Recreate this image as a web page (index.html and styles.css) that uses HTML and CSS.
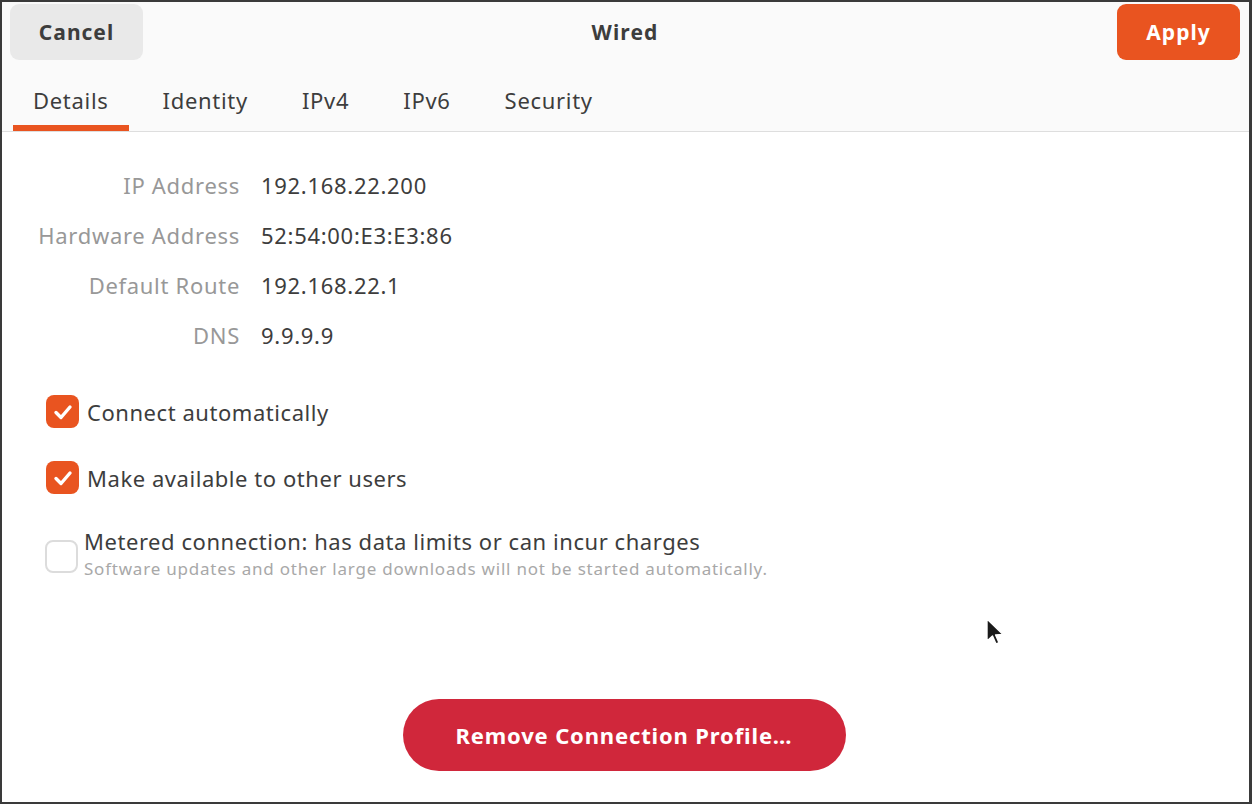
FILE: index.html
```html
<!DOCTYPE html>
<html>
<head>
<meta charset="utf-8">
<link rel="stylesheet" href="styles.css">
</head>
<body>
<div class="window">
  <header class="header">
    <div class="titlebar">
      <button class="btn btn-cancel">Cancel</button>
      <div class="title">Wired</div>
      <button class="btn btn-apply">Apply</button>
    </div>
    <nav class="tabs">
      <div class="tab active">Details</div>
      <div class="tab">Identity</div>
      <div class="tab">IPv4</div>
      <div class="tab">IPv6</div>
      <div class="tab">Security</div>
    </nav>
  </header>
  <main class="content">
    <div class="details">
      <div class="label">IP Address</div><div class="value">192.168.22.200</div>
      <div class="label">Hardware Address</div><div class="value">52:54:00:E3:E3:86</div>
      <div class="label">Default Route</div><div class="value">192.168.22.1</div>
      <div class="label">DNS</div><div class="value">9.9.9.9</div>
    </div>
    <div class="checks">
      <div class="check-row">
        <span class="box checked"><svg viewBox="0 0 32 32" width="32" height="32"><path d="M9 16.5 L14 21.5 L23 11" fill="none" stroke="#fff" stroke-width="3.4" stroke-linecap="round" stroke-linejoin="round"/></svg></span>
        <span class="check-text">Connect automatically</span>
      </div>
      <div class="check-row">
        <span class="box checked"><svg viewBox="0 0 32 32" width="32" height="32"><path d="M9 16.5 L14 21.5 L23 11" fill="none" stroke="#fff" stroke-width="3.4" stroke-linecap="round" stroke-linejoin="round"/></svg></span>
        <span class="check-text">Make available to other users</span>
      </div>
      <div class="check-row metered">
        <span class="box unchecked"></span>
        <div class="check-lines">
          <span class="check-text">Metered connection: has data limits or can incur charges</span>
          <span class="check-sub">Software updates and other large downloads will not be started automatically.</span>
        </div>
      </div>
    </div>
    <div class="spacer"></div>
    <div class="remove-wrap">
      <button class="btn btn-remove">Remove Connection Profile…</button>
    </div>
  </main>
  <svg class="cursor" width="22" height="30" viewBox="0 0 22 30"><path d="M2 2 L2 24 L7.5 19 L11 27 L14 25.6 L10.6 18 L18 17.5 Z" fill="#1a1a1a" stroke="#fff" stroke-width="1.4" stroke-linejoin="round"/></svg>
</div>
</body>
</html>
```
FILE: styles.css
```css
* { box-sizing: border-box; }
html, body { margin: 0; padding: 0; }
body {
  width: 1252px;
  height: 804px;
  font-family: "Noto Sans", "Open Sans", sans-serif;
  color: #3d3d3d;
  background: #fff;
  overflow: hidden;
}
.window {
  position: relative;
  width: 1252px;
  height: 804px;
  border: 2px solid #3a3a3a;
  border-right-width: 3px;
  display: flex;
  flex-direction: column;
  background: #fff;
}
.header {
  background: #fafafa;
  border-bottom: 1px solid #dedede;
}
.titlebar {
  display: grid;
  grid-template-columns: 1fr auto 1fr;
  align-items: center;
  padding: 2px 9px 0 8px;
  height: 58px;
}
.btn {
  font-family: inherit;
  border: none;
  font-weight: 700;
  font-size: 21px;
  letter-spacing: 1px;
  cursor: default;
}
.btn-cancel {
  justify-self: start;
  width: 133px;
  height: 56px;
  border-radius: 9px;
  background: #e9e9e9;
  color: #3d3d3d;
}
.btn-apply {
  justify-self: end;
  width: 123px;
  height: 56px;
  border-radius: 9px;
  background: #e95420;
  color: #fff;
}
.title {
  font-weight: 700;
  font-size: 21px;
  letter-spacing: 1.1px;
  color: #3d3d3d;
}
.tabs {
  display: flex;
  height: 71px;
  padding-left: 11px;
  align-items: stretch;
}
.tab {
  font-size: 22px;
  letter-spacing: 0.7px;
  color: #3d3d3d;
  padding: 15px 20px 0 20px;
  display: flex;
  align-items: center;
  margin-right: 14px;
  border-bottom: 6px solid transparent;
}
.tab.active {
  border-bottom-color: #e95420;
}
.content {
  flex: 1;
  display: flex;
  flex-direction: column;
}
.details {
  display: grid;
  grid-template-columns: 238px auto;
  column-gap: 21px;
  row-gap: 20px;
  padding-top: 38px;
  align-content: start;
  font-size: 22px;
  letter-spacing: 0.7px;
  line-height: 30px;
}
.label {
  text-align: right;
  color: #989898;
}
.value {
  color: #3d3d3d;
}
.checks {
  display: flex;
  flex-direction: column;
  padding-left: 44px;
  padding-top: 45px;
  gap: 33px;
}
.check-row {
  display: flex;
  align-items: center;
  gap: 8px;
  height: 33px;
}
.box {
  width: 33px;
  height: 33px;
  border-radius: 8px;
  display: flex;
  align-items: center;
  justify-content: center;
  flex: none;
}
.box.checked { background: #e95420; }
.box.unchecked {
  border: 2px solid #dcdcdc;
  background: #fff;
}
.check-text {
  font-size: 22px;
  letter-spacing: 0.55px;
  color: #3d3d3d;
}
.metered {
  height: auto;
  gap: 6px;
  margin-left: -1px;
  margin-top: 2px;
}
.check-lines {
  display: flex;
  flex-direction: column;
  line-height: 28px;
  margin-top: -2px;
}
.check-sub {
  font-size: 17px;
  letter-spacing: 0.78px;
  color: #a8a8a8;
  line-height: 28px;
}
.spacer { flex: 1; }
.remove-wrap {
  display: flex;
  justify-content: center;
  padding-bottom: 31px;
  padding-right: 3px;
}
.btn-remove {
  width: 443px;
  height: 72px;
  border-radius: 36px;
  background: #d0273b;
  color: #fff;
  font-size: 22px;
  letter-spacing: 0.85px;
}
.cursor {
  position: absolute;
  left: 983px;
  top: 615px;
}
```
